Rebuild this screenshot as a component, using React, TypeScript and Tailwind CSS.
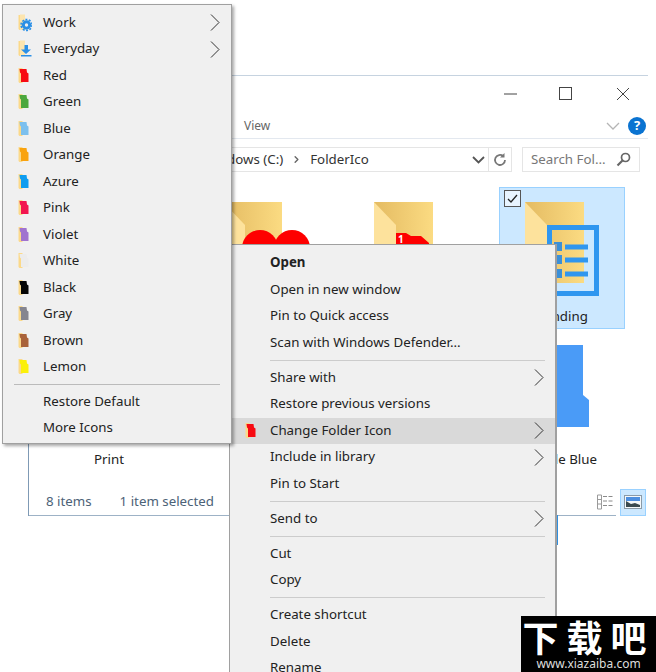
import { ChevronRight } from "lucide-react";
import type { ReactNode } from "react";

type Entry = { label: string; color?: string; badge?: "work" | "down"; arrow?: boolean };

const FOLDER_MENU: Entry[] = [
  { label: "Work", badge: "work", arrow: true },
  { label: "Everyday", badge: "down", arrow: true },
  { label: "Red", color: "#f70a12" },
  { label: "Green", color: "#4da83d" },
  { label: "Blue", color: "#7cc0ee" },
  { label: "Orange", color: "#f9a30f" },
  { label: "Azure", color: "#0f9df0" },
  { label: "Pink", color: "#f2154f" },
  { label: "Violet", color: "#a173cf" },
  { label: "White", color: "#ececec" },
  { label: "Black", color: "#050505" },
  { label: "Gray", color: "#85858f" },
  { label: "Brown", color: "#a9623a" },
  { label: "Lemon", color: "#fbf00a" },
];

function Flag({ color, badge }: { color?: string; badge?: Entry["badge"] }) {
  return (
    <svg width="14" height="18" viewBox="0 0 14 18" className="shrink-0">
      <path d="M0.500 1h4v15h-3l-1-1z" fill="#fbd98a" />
      {badge ? (
        <path d="M2 0.500h5v15.500H2z" fill="#fde5ae" />
      ) : (
        <path d="M1.500 2h7l0.500 3.500 1.500 1v8.500h-7.500v-8.500l-1-1z" fill={color} />
      )}
      {badge === "work" && (
        <>
          <circle cx="8.500" cy="11" r="5.500" fill="none" stroke="#2a8fe6" strokeWidth="1.500" strokeDasharray="2 1.450" />
          <circle cx="8.500" cy="11" r="3.200" fill="none" stroke="#2a8fe6" strokeWidth="3" />
        </>
      )}
      {badge === "down" && <path d="M6.500 5h3.500v4.500h3l-5 4.500-5-4.500h3.500zM3 15h10.500v1.500H3z" fill="#2a8fe6" />}
    </svg>
  );
}

function MenuRow({
  children,
  arrow,
  active,
  icon,
  bold,
}: {
  children: ReactNode;
  arrow?: boolean;
  active?: boolean;
  icon?: ReactNode;
  bold?: boolean;
}) {
  return (
    <div className={`flex h-[26.5px] items-center ${active ? "bg-[#d9d9d9]" : ""}`}>
      <span className="flex w-[40px] justify-end pr-[11px]">{icon}</span>
      <span className={`flex-1 whitespace-nowrap ${bold ? "font-bold" : ""}`}>{children}</span>
      {arrow && (
        <svg width="10" height="17" viewBox="0 0 10 17" className="mr-[11px]">
          <path d="M1 0.500l8 8-8 8" fill="none" stroke="#333" strokeWidth="1" />
        </svg>
      )}
    </div>
  );
}

function FolderBase({ id }: { id: string }) {
  return (
    <>
      <defs>
        <linearGradient id={id} x1="0" x2="1" y1="0" y2="0">
          <stop offset="0" stopColor="#e4bb62" />
          <stop offset="1" stopColor="#fbdb82" />
        </linearGradient>
      </defs>
      <rect x="26" y="15" width="59" height="81" fill={`url(#${id})`} />
      <path d="M26 15l22 23v58H26z" fill="#fde29c" />
    </>
  );
}

function Cell({ children, label, selected }: { children?: ReactNode; label?: string; selected?: boolean }) {
  return (
    <div
      className={`relative flex h-[142px] w-[126px] flex-col items-center border ${
        selected ? "border-[#99d1ff] bg-[#cce8ff]" : "border-transparent"
      }`}
    >
      <svg width="126" height="115" viewBox="0 0 126 115" className="-m-px shrink-0">
        {children}
      </svg>
      {label && <span className="mt-[6px] text-[#222]">{label}</span>}
      {selected && (
        <span className="absolute top-[2px] left-[4px] flex h-[17px] w-[17px] items-center justify-center border border-[#555] bg-[#e8f4ff]">
          <svg width="13" height="13" viewBox="0 0 13 13">
            <path d="M2 7l3 3 6-7" fill="none" stroke="#222" strokeWidth="1.300" />
          </svg>
        </span>
      )}
    </div>
  );
}

function ExplorerWindow() {
  return (
    <div className="absolute top-[75px] left-[28px] flex h-[441px] w-[620px] flex-col border-t border-l border-t-[#c6d3e0] border-l-[#7f9ab5] bg-white text-[13.3px]">
      {/* title bar */}
      <div className="flex h-[37px] shrink-0 items-center justify-end text-[#333]">
        <svg width="140" height="16" viewBox="0 0 140 16" className="mr-[16px] mt-[-2px]">
          <path d="M12 8h13" stroke="#444" strokeWidth="1" />
          <rect x="67.500" y="1.500" width="12" height="12" fill="none" stroke="#444" />
          <path d="M125 2l12 12M137 2l-12 12" stroke="#444" strokeWidth="1" />
        </svg>
      </div>
      {/* ribbon */}
      <div className="flex h-[26px] shrink-0 items-center justify-between border-b border-[#e3e8ef] pr-[2px] pl-[215px] text-[12px] text-[#666]">
        <span>View</span>
        <span className="flex items-center gap-[8px]">
          <svg width="14" height="8" viewBox="0 0 14 8">
            <path d="M1 1l6 6 6-6" fill="none" stroke="#b5b5b5" strokeWidth="1.300" />
          </svg>
          <span className="flex h-[18px] w-[18px] items-center justify-center rounded-full bg-[#0a73d1] text-[13px] font-bold text-white">
            ?
          </span>
        </span>
      </div>
      {/* address + search */}
      <div className="mt-[8px] flex h-[25px] shrink-0 pl-[130px]">
        <div className="flex w-[329px] items-center justify-between border border-r-0 border-[#e5e5e5] pl-[43px]">
          <span className="flex items-center gap-[8px] whitespace-nowrap text-[#333]">
            Windows (C:)
            <ChevronRight size={11} strokeWidth={3} className="text-[#666]" />
            FolderIco
          </span>
          <svg width="13" height="8" viewBox="0 0 13 8" className="mr-[3px]">
            <path d="M1 1l5.500 5.500L12 1" fill="none" stroke="#555" strokeWidth="1.800" />
          </svg>
        </div>
        <div className="flex w-[24px] items-center justify-center border border-[#e5e5e5]">
          <svg width="14" height="14" viewBox="0 0 14 14">
            <path d="M12 7a5 5 0 1 1-1.700-3.800" fill="none" stroke="#777" strokeWidth="1.800" />
            <path d="M11.500 0v4.500H7z" fill="#777" />
          </svg>
        </div>
        <div className="ml-[10px] flex w-[118px] items-center justify-between border border-[#e5e5e5] pr-[8px] pl-[8px] text-[#777]">
          <span className="whitespace-nowrap">Search Fol...</span>
          <svg width="15" height="15" viewBox="0 0 15 15">
            <circle cx="9.500" cy="5.500" r="4" fill="none" stroke="#666" strokeWidth="1.700" />
            <path d="M6.500 8.500L1.500 13.500" stroke="#666" strokeWidth="2.200" />
          </svg>
        </div>
      </div>
      {/* items */}
      <div className="mt-[15px] grid flex-1 grid-cols-[repeat(4,126px)] content-start gap-x-[25px] gap-y-px pl-[17px]">
        <Cell />
        <Cell>
          <FolderBase id="f1" />
          <circle cx="63" cy="61" r="18" fill="#fe0000" />
          <circle cx="95" cy="61" r="18" fill="#fe0000" />
        </Cell>
        <Cell>
          <FolderBase id="f2" />
          <path d="M48 46h10l5 3h10l8 7v20H48z" fill="#fe0000" />
          <text x="50" y="56" fontSize="10" fontWeight="700" fill="#fff">
            1
          </text>
        </Cell>
        <Cell selected label="Pending">
          <FolderBase id="f3" />
          <rect x="50.500" y="40.500" width="47" height="66" fill="none" stroke="#2f96ef" strokeWidth="5" />
          <path d="M66 60h23M66 73h23M66 87h23" stroke="#2f96ef" strokeWidth="5" />
          <path d="M55 55h8v9h-8zM55 68h8v9h-8zM55 82h8v9h-8z" fill="#3a8fd8" />
        </Cell>
        <Cell label="Print" />
        <Cell />
        <Cell />
        <Cell label="Maple Blue">
          <path d="M27 15h57v50l6 5v27H27z" fill="#4a9bf7" />
        </Cell>
      </div>
      {/* status bar */}
      <div className="flex h-[29px] shrink-0 items-center pt-[3px] pr-[2px] pl-[17px] text-[#4c6277]">
        <span>8 items</span>
        <span className="ml-[28px]">1 item selected</span>
        <span className="ml-auto flex items-center gap-[6px]">
          <svg width="18" height="18" viewBox="0 0 18 18">
            <path d="M1.500 2h4v14h-4zM1.500 6.500h4M1.500 11h4" fill="none" stroke="#9a9a9a" />
            <path d="M7 3.500h4M12.500 3.500h4M7 8h4M12.500 8h4M7 12.500h4M12.500 12.500h4" stroke="#8a8a8a" />
          </svg>
          <span className="flex h-[27px] w-[26px] items-center justify-center border border-[#99d1ff] bg-[#cce8ff]">
            <svg width="18" height="14" viewBox="0 0 18 14">
              <rect x="0.500" y="0.500" width="17" height="13" fill="#f4f8fb" stroke="#8a9aa8" />
              <path d="M2 2h14v4H2z" fill="#4d8fe0" />
              <path d="M2 6l5 3 4-1 5 2v2H2z" fill="#3a4a50" />
            </svg>
          </span>
        </span>
      </div>
      <div className="h-px w-[587px] shrink-0 bg-[#9db2c6]" />
    </div>
  );
}

function ContextMenu() {
  const sep = <div className="mr-[10px] ml-[40px] h-[8.5px] shrink-0 bg-[linear-gradient(#ccc,#ccc)] bg-[length:100%_1px] bg-center bg-no-repeat" />;
  return (
    <div className="absolute top-[244px] left-[229px] w-[328px] border border-r-2 border-[#a0a0a0] bg-[#f0f0f0] pt-[5px] text-[13.3px] text-[#222]">
      <MenuRow bold>Open</MenuRow>
      <MenuRow>Open in new window</MenuRow>
      <MenuRow>Pin to Quick access</MenuRow>
      <MenuRow>Scan with Windows Defender...</MenuRow>
      {sep}
      <MenuRow arrow>Share with</MenuRow>
      <MenuRow>Restore previous versions</MenuRow>
      <MenuRow arrow active icon={<Flag color="#f70a12" />}>
        Change Folder Icon
      </MenuRow>
      <MenuRow arrow>Include in library</MenuRow>
      <MenuRow>Pin to Start</MenuRow>
      {sep}
      <MenuRow arrow>Send to</MenuRow>
      {sep}
      <MenuRow>Cut</MenuRow>
      <MenuRow>Copy</MenuRow>
      {sep}
      <MenuRow>Create shortcut</MenuRow>
      <MenuRow>Delete</MenuRow>
      <MenuRow>Rename</MenuRow>
    </div>
  );
}

function FolderMenu() {
  return (
    <div className="absolute top-[4px] left-[2px] h-[440px] w-[230px] border border-[#a0a0a0] bg-[#f0f0f0] pt-[4.500px] text-[13.3px] text-[#222] shadow-[2px_2px_3px_rgba(0,0,0,0.35)]">
      {FOLDER_MENU.map((e) => (
        <MenuRow key={e.label} arrow={e.arrow} icon={<Flag color={e.color} badge={e.badge} />}>
          {e.label}
        </MenuRow>
      ))}
      <div className="mr-[11px] ml-[11px] h-[8px] bg-[linear-gradient(#bbb,#bbb)] bg-[length:100%_1px] bg-center bg-no-repeat" />
      <MenuRow>Restore Default</MenuRow>
      <MenuRow>More Icons</MenuRow>
    </div>
  );
}

function Watermark() {
  return (
    <div className="absolute top-[616px] left-[521px] flex h-[56px] w-[135px] flex-col items-center overflow-hidden bg-black text-white">
      <span className="h-[40px] text-[36px] leading-[40px] font-bold tracking-[8px] font-['Noto_Sans_CJK_SC',sans-serif]">
        下载吧
      </span>
      <span className="h-[16px] text-[12px] leading-[16px] text-[#ddd]">www.xiazaiba.com</span>
    </div>
  );
}

export default function App() {
  return (
    <div className="relative h-[672px] w-[656px] overflow-hidden bg-white font-['Noto_Sans','Open_Sans',sans-serif]">
      <ExplorerWindow />
      <div className="absolute top-[515px] left-[555px] h-[30px] w-[3px] bg-[#2f8fe0]" />
      <ContextMenu />
      <FolderMenu />
      <Watermark />
    </div>
  );
}
